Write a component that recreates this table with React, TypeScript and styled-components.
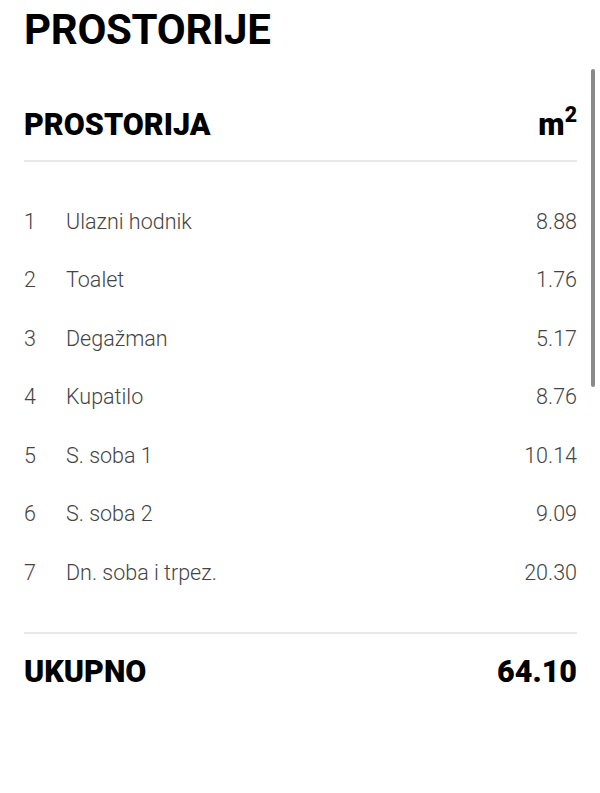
import styled, { createGlobalStyle } from 'styled-components';

const GlobalStyle = createGlobalStyle`
  html, body {
    margin: 0;
    padding: 0;
    background: #ffffff;
  }
  body {
    font-family: Roboto, "Liberation Sans", Arial, sans-serif;
    color: #000;
  }
`;

interface Room {
  id: number;
  name: string;
  area: string;
}

const rooms: Room[] = [
  { id: 1, name: 'Ulazni hodnik', area: '8.88' },
  { id: 2, name: 'Toalet', area: '1.76' },
  { id: 3, name: 'Degažman', area: '5.17' },
  { id: 4, name: 'Kupatilo', area: '8.76' },
  { id: 5, name: 'S. soba 1', area: '10.14' },
  { id: 6, name: 'S. soba 2', area: '9.09' },
  { id: 7, name: 'Dn. soba i trpez.', area: '20.30' },
];

const App: React.FC = () => {
  return (
    <Page>
      <GlobalStyle />
      <Title>PROSTORIJE</Title>
      <HeaderRow>
        <HeaderLabel>PROSTORIJA</HeaderLabel>
        <HeaderLabel>
          m<sup>2</sup>
        </HeaderLabel>
      </HeaderRow>
      <List>
        {rooms.map((room) => (
          <Row key={room.id}>
            <Index>{room.id}</Index>
            <Name>{room.name}</Name>
            <Area>{room.area}</Area>
          </Row>
        ))}
      </List>
      <TotalRow>
        <TotalText>UKUPNO</TotalText>
        <TotalText>64.10</TotalText>
      </TotalRow>
      <ScrollThumb />
    </Page>
  );
};

export default App;

const Page = styled.div`
  position: relative;
  width: 600px;
  height: 793px;
  box-sizing: border-box;
  padding: 0 23px 0 24px;
  overflow: hidden;
`;

const Title = styled.h1`
  margin: 0;
  height: 60px;
  line-height: 60px;
  font-size: 42px;
  font-weight: 700;
  letter-spacing: -0.3px;
`;

const HeaderRow = styled.div`
  display: flex;
  align-items: center;
  justify-content: space-between;
  height: 70px;
  margin-top: 30px;
  border-bottom: 2px solid #e8e8e8;
`;

const HeaderLabel = styled.span`
  font-size: 30.5px;
  font-weight: 900;
  line-height: 1;

  sup {
    font-size: 0.7em;
    line-height: 0;
    vertical-align: 0.62em;
  }
`;

const List = styled.div`
  display: flex;
  flex-direction: column;
  padding: 30px 0 30px;
  border-bottom: 2px solid #e8e8e8;
`;

const Row = styled.div`
  display: flex;
  align-items: center;
  height: 58.5px;
  font-size: 21.5px;
  font-weight: 300;
  color: #444444;
`;

const Index = styled.span`
  width: 42px;
  flex-shrink: 0;
`;

const Name = styled.span`
  flex: 1;
`;

const Area = styled.span`
  text-align: right;
`;

const TotalRow = styled.div`
  display: flex;
  align-items: center;
  justify-content: space-between;
  height: 76px;
`;

const TotalText = styled.span`
  font-size: 30.5px;
  font-weight: 900;
`;

const ScrollThumb = styled.div`
  position: absolute;
  top: 69px;
  right: 5px;
  width: 4px;
  height: 318px;
  border-radius: 2px;
  background: #8a8a8a;
`;
